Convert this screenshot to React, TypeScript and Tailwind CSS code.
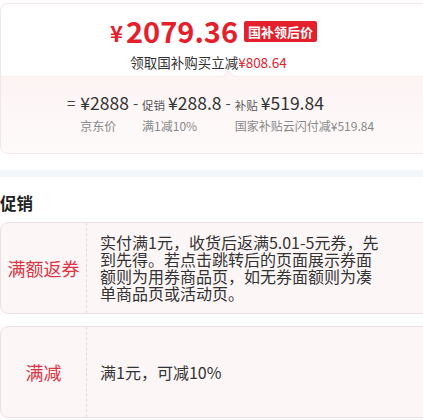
import React from "react";

const cjk = "font-['Noto_Sans_CJK_SC','Noto_Sans',sans-serif]";

function PricePart({
  label,
  price,
  note,
}: {
  label?: string;
  price: string;
  note: string;
}) {
  return (
    <div className="flex flex-col">
      <div className="flex items-baseline h-[22px]">
        {label && <span className="text-[11.5px] text-[#555] mr-[3px]">{label}</span>}
        <span className="text-[17.5px] text-[#333] leading-[22px]">{price}</span>
      </div>
      <div className="text-[12px] text-[#888] leading-[18px] mt-[3px] whitespace-nowrap">
        {note}
      </div>
    </div>
  );
}

function PromoCard({ tag, text }: { tag: string; text: React.ReactNode }) {
  return (
    <div className="flex h-[92px] -mr-3 rounded-lg border border-[#f0dfe2] bg-[#fdf6f7]">
      <div className="w-[86px] shrink-0 flex items-center justify-center border-r border-dashed border-[#ecd4d9]">
        <span className="text-[18px] text-[#dc3444]">{tag}</span>
      </div>
      <div className="flex items-center pl-[13px]">
        <div className="w-[283px] text-[16px] leading-[17px] text-[#333]">{text}</div>
      </div>
    </div>
  );
}

export default function App() {
  return (
    <div className={`w-[423px] h-[420px] overflow-hidden bg-white ${cjk}`}>
      {/* price card */}
      <div className="mt-[3px] -mr-3 rounded-lg border border-[#efe6e8] overflow-hidden">
        <div className="h-[72px] flex flex-col items-center pt-[9px] pr-[8px]">
          <div className="flex items-center h-[34px]">
            <span className="text-[#e4202d] text-[22px] font-bold mr-[3px] mt-[4px]">¥</span>
            <span className="text-[#e4202d] text-[29px] font-semibold leading-[34px]">
              2079.36
            </span>
            <span className="ml-[6px] mt-[2px] bg-[#e4202d] text-white text-[13px] font-bold leading-[21px] px-[4px] rounded-[2px]">
              国补领后价
            </span>
          </div>
          <div className="mt-[6px] text-[13.5px] leading-[18px] text-[#333] -ml-[10px]">
            领取国补购买立减<span className="text-[#e4202d]">¥808.64</span>
          </div>
        </div>
        <div className="relative h-[77px] bg-gradient-to-b from-[#fdf4f4] to-[#fefafa] border-t border-[#f6eded]">
          <div className="absolute left-[223px] -top-[5px] w-[9px] h-[9px] rotate-45 bg-[#fdf4f4] border-l border-t border-[#f6eded]" />
          <div className="flex items-start pl-[66px] pt-[15px]">
            <span className="text-[15px] text-[#444] leading-[22px] mr-[5px]">=</span>
            <PricePart price="¥2888" note="京东价" />
            <span className="text-[15px] text-[#444] leading-[22px] mx-[4px]">-</span>
            <PricePart label="促销" price="¥288.8" note="满1减10%" />
            <span className="text-[15px] text-[#444] leading-[22px] mx-[4px]">-</span>
            <PricePart label="补贴" price="¥519.84" note="国家补贴云闪付减¥519.84" />
          </div>
        </div>
      </div>

      <div className="mt-[16px] h-[7px] bg-[#f4f7fa]" />

      <div className="mt-[14px] text-[16.5px] font-bold leading-[24px] text-[#222]">促销</div>

      <div className="mt-[7px] flex flex-col gap-[12px]">
        <PromoCard
          tag="满额返券"
          text="实付满1元，收货后返满5.01-5元券，先到先得。若点击跳转后的页面展示券面额则为用券商品页，如无券面额则为凑单商品页或活动页。"
        />
        <PromoCard tag="满减" text="满1元，可减10%" />
      </div>
    </div>
  );
}
